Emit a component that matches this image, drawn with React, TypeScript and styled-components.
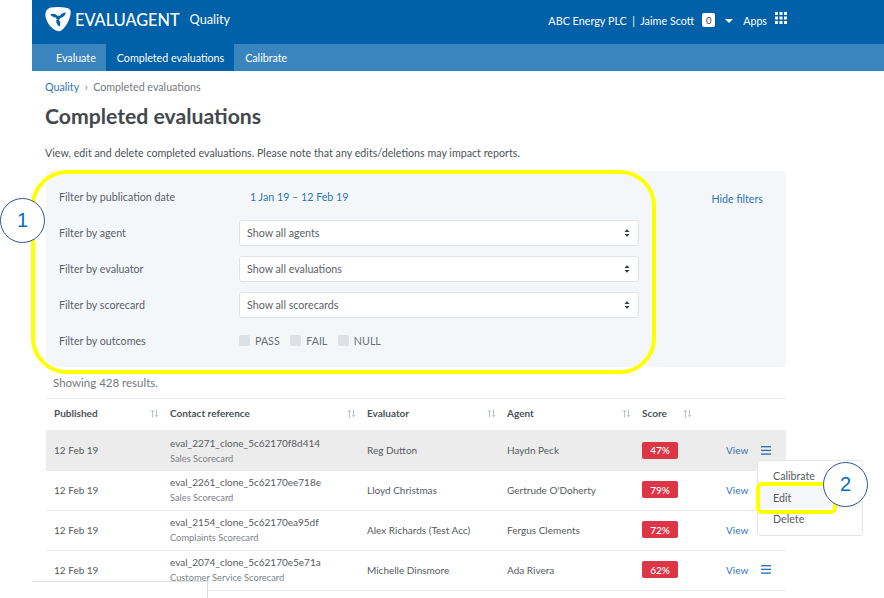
import styled, { createGlobalStyle } from 'styled-components'

const COLUMNS = '116px 197px 140px 135px 84px 1fr'

const rows = [
  { ref: 'eval_2271_clone_5c62170f8d414', card: 'Sales Scorecard', evaluator: 'Reg Dutton', agent: 'Haydn Peck', score: '47%', active: true },
  { ref: 'eval_2261_clone_5c62170ee718e', card: 'Sales Scorecard', evaluator: 'Lloyd Christmas', agent: "Gertrude O'Doherty", score: '79%' },
  { ref: 'eval_2154_clone_5c62170ea95df', card: 'Complaints Scorecard', evaluator: 'Alex Richards (Test Acc)', agent: 'Fergus Clements', score: '72%' },
  { ref: 'eval_2074_clone_5c62170e5e71a', card: 'Customer Service Scorecard', evaluator: 'Michelle Dinsmore', agent: 'Ada Rivera', score: '62%', menu: true },
]

const Logo = () => (
  <svg width="26" height="25" viewBox="0 0 26 25">
    <path d="M6 .6C11 -.3 17 -.2 22 1c2.600.6 4 2.600 3.700 5-.6 6-3.700 12.600-8.700 17-1.800 1.600-4 1.800-6 .6C6 21 2 16.500.5 9.500-.2 5 2 1.400 6 .6z" fill="#fff" />
    <circle cx="13.200" cy="10.600" r="2.200" fill="#0060a8" />
    <path d="M14.500 9.200C15.500 7.500 17.500 5.800 20.800 5.200 20.600 8 18.500 10.500 15.200 11zM13.800 12.500c1.400 1.800 1.800 4.200 1 6.900-2.500-.8-4-3.200-3.400-6.600zM11.400 10.500C9.500 10.600 7 9.700 5.300 7.400 7.800 6 10.800 6.900 12.400 9z" fill="#0060a8" />
  </svg>
)

const AppsIcon = () => (
  <svg width="12" height="12" viewBox="0 0 12 12" fill="#fff">
    {[0, 4.500, 9].flatMap(y =>
      [0, 4.500, 9].map(x => <rect key={`${x}-${y}`} x={x} y={y} width="3" height="3" />),
    )}
  </svg>
)

const SortIcon = () => (
  <svg width="9" height="9" viewBox="0 0 11 10" fill="none" stroke="#b9bfc4" strokeWidth="1.200">
    <path d="M3 10V1M1 3l2-2 2 2M8 0v9M6 7l2 2 2-2" />
  </svg>
)

const SelectArrows = () => (
  <svg width="6" height="8" viewBox="0 0 7 9" fill="#33393f">
    <path d="M3.500 0L6.500 3.400H.5zM3.500 9L.5 5.600h6z" />
  </svg>
)

const MenuIcon = () => (
  <svg width="10" height="9" viewBox="0 0 10 9" fill="#2f74b5">
    <rect width="10" height="1.400" />
    <rect y="3.700" width="10" height="1.400" />
    <rect y="7.400" width="10" height="1.400" />
  </svg>
)

export default function App() {
  return (
    <Page>
      <GlobalStyle />
      <Header>
        <Brand>
          <Logo />
          <BrandName>EVALUAGENT</BrandName>
          <Product>Quality</Product>
        </Brand>
        <UserArea>
          <UserName>ABC Energy PLC&nbsp; |&nbsp; Jaime Scott</UserName>
          <Badge>0</Badge>
          <Caret />
          <span>Apps</span>
          <AppsIcon />
        </UserArea>
      </Header>
      <Tabs>
        <Tab>Evaluate</Tab>
        <Tab $active>Completed evaluations</Tab>
        <Tab>Calibrate</Tab>
      </Tabs>
      <Content>
        <Breadcrumb>
          <a>Quality</a>
          <i>›</i>
          <span>Completed evaluations</span>
        </Breadcrumb>
        <Title>Completed evaluations</Title>
        <Intro>View, edit and delete completed evaluations. Please note that any edits/deletions may impact reports.</Intro>
        <FilterPanel>
          <FilterList>
            <FilterRow>
              <FilterLabel>Filter by publication date</FilterLabel>
              <DateRange>1 Jan 19 – 12 Feb 19</DateRange>
            </FilterRow>
            <FilterRow>
              <FilterLabel>Filter by agent</FilterLabel>
              <Select>Show all agents<SelectArrows /></Select>
            </FilterRow>
            <FilterRow>
              <FilterLabel>Filter by evaluator</FilterLabel>
              <Select>Show all evaluations<SelectArrows /></Select>
            </FilterRow>
            <FilterRow>
              <FilterLabel>Filter by scorecard</FilterLabel>
              <Select>Show all scorecards<SelectArrows /></Select>
            </FilterRow>
            <FilterRow>
              <FilterLabel>Filter by outcomes</FilterLabel>
              <Outcomes>
                <Outcome><Check />PASS</Outcome>
                <Outcome><Check />FAIL</Outcome>
                <Outcome><Check />NULL</Outcome>
              </Outcomes>
            </FilterRow>
          </FilterList>
          <HideFilters>Hide filters</HideFilters>
        </FilterPanel>
        <ResultCount>Showing 428 results.</ResultCount>
        <HeadRow>
          <HeadCell>Published<SortIcon /></HeadCell>
          <HeadCell>Contact reference<SortIcon /></HeadCell>
          <HeadCell>Evaluator<SortIcon /></HeadCell>
          <HeadCell>Agent<SortIcon /></HeadCell>
          <ScoreHead>Score<SortIcon /></ScoreHead>
        </HeadRow>
        {rows.map(row => (
          <Row key={row.ref} $active={row.active}>
            <span>12 Feb 19</span>
            <Reference>
              {row.ref}
              <small>{row.card}</small>
            </Reference>
            <span>{row.evaluator}</span>
            <span>{row.agent}</span>
            <span><Score>{row.score}</Score></span>
            <Actions>
              <a>View</a>
              {(row.active || row.menu) && <MenuIcon />}
            </Actions>
          </Row>
        ))}
      </Content>

      <RowMenu>
        <MenuItem>Calibrate</MenuItem>
        <MenuItem $hover>Edit</MenuItem>
        <MenuItem>Delete</MenuItem>
      </RowMenu>
      <FiltersHighlight />
      <EditHighlight />
      <StepOne>1</StepOne>
      <StepTwo>2</StepTwo>
      <BottomSheet />
    </Page>
  )
}

const GlobalStyle = createGlobalStyle`
  html, body {
    margin: 0;
    background: #fff;
  }
  body {
    font-family: Lato, "Open Sans", "Liberation Sans", sans-serif;
    color: #4b5257;
  }
`
const Page = styled.div`
  position: relative;
  box-sizing: border-box;
  width: 884px;
  height: 598px;
  padding-left: 32px;
  overflow: hidden;
`
const Header = styled.header`
  display: flex;
  justify-content: space-between;
  align-items: flex-start;
  height: 44px;
  padding: 6px 97px 0 13px;
  box-sizing: border-box;
  background: #0060a8;
  color: #fff;
`
const Brand = styled.div`
  display: flex;
  align-items: center;
  height: 26px;
`
const BrandName = styled.span`
  margin-left: 4px;
  font-size: 16.300px;
  font-weight: 500;
`
const Product = styled.span`
  margin-left: 10px;
  font-size: 12.700px;
`
const UserArea = styled.div`
  display: flex;
  align-items: center;
  height: 28px;
  font-size: 10.700px;
  gap: 8px;
  svg {
    margin: -4px 0 0 0;
  }
`
const UserName = styled.span`
  font-size: 10.800px;
`
const Badge = styled.span`
  display: flex;
  justify-content: center;
  align-items: center;
  width: 13px;
  height: 14px;
  border-radius: 2px;
  background: #fff;
  color: #444;
  font-size: 9.500px;
`
const Caret = styled.span`
  margin: 1px 2px 0 2px;
  border-left: 4px solid transparent;
  border-right: 4px solid transparent;
  border-top: 4px solid #fff;
`
const Tabs = styled.nav`
  display: flex;
  height: 27px;
  background: #3a85be;
`
const Tab = styled.a<{ $active?: boolean }>`
  display: flex;
  align-items: center;
  padding: 0 10px 0 ${p => (p.$active ? '11px' : '24px')};
  background: ${p => (p.$active ? '#0060a8' : 'transparent')};
  color: #fff;
  font-size: 10.700px;
  &:last-child {
    padding-left: 11px;
  }
`
const Content = styled.main`
  padding: 0 98px 0 14px;
`
const Breadcrumb = styled.div`
  display: flex;
  gap: 5.500px;
  margin: 8px 0 0 -1px;
  height: 15px;
  line-height: 15px;
  font-size: 10.700px;
  color: #73797e;
  a {
    color: #2f74b5;
  }
  i {
    font-style: normal;
  }
`
const Title = styled.h1`
  margin: 8px 0 0 -1px;
  font-size: 21.200px;
  line-height: 28px;
  font-weight: 700;
  color: #43484c;
`
const Intro = styled.p`
  margin: 15px 0 0 -1px;
  font-size: 10.700px;
  line-height: 16px;
  color: #4b5257;
`
const FilterPanel = styled.section`
  display: flex;
  justify-content: space-between;
  box-sizing: border-box;
  height: 196px;
  margin-top: 10px;
  padding: 8px 23px 0 13px;
  border-radius: 3px;
  background: #f4f7fa;
`
const FilterList = styled.div`
  display: flex;
  flex-direction: column;
`
const FilterRow = styled.div`
  display: flex;
  align-items: center;
  height: 36px;
`
const FilterLabel = styled.span`
  width: 180px;
  margin-top: -1px;
  font-size: 10.700px;
  color: #5a6167;
`
const DateRange = styled.span`
  margin: -1px 0 0 11px;
  font-size: 10.700px;
  color: #2f74b5;
`
const Select = styled.div`
  display: flex;
  justify-content: space-between;
  align-items: center;
  box-sizing: border-box;
  width: 400px;
  height: 26px;
  margin-top: -1px;
  padding: 0 8px 0 7px;
  border: 1px solid #dfe3e8;
  border-radius: 3px;
  background: #fff;
  font-size: 10.700px;
  color: #5a6167;
`
const Outcomes = styled.div`
  display: flex;
  gap: 10.500px;
  margin-top: -1px;
`
const Outcome = styled.label`
  display: flex;
  align-items: center;
  gap: 5px;
  font-size: 10.700px;
  color: #6a7076;
`
const Check = styled.span`
  width: 11px;
  height: 11px;
  border-radius: 2px;
  background: #dde1e6;
`
const HideFilters = styled.a`
  margin-top: 13px;
  font-size: 10.700px;
  color: #2f74b5;
`
const ResultCount = styled.div`
  height: 31px;
  padding: 9px 0 0 7px;
  box-sizing: border-box;
  font-size: 11.500px;
  line-height: 14px;
  color: #73797e;
`
const HeadRow = styled.div`
  display: grid;
  grid-template-columns: ${COLUMNS};
  align-items: center;
  box-sizing: border-box;
  height: 32px;
  padding: 0 0 3px 8px;
  border-top: 1px solid #e6e8ea;
`
const HeadCell = styled.div`
  display: flex;
  justify-content: space-between;
  align-items: center;
  padding-right: 11px;
  font-size: 10px;
  font-weight: 700;
  color: #4b5257;
`
const ScoreHead = styled(HeadCell)`
  justify-content: flex-start;
  gap: 16px;
`
const Row = styled.div<{ $active?: boolean }>`
  display: grid;
  grid-template-columns: ${COLUMNS};
  align-items: center;
  box-sizing: border-box;
  height: ${p => (p.$active ? '41px' : '40px')};
  padding: 0 0 ${p => (p.$active ? '0' : '2px')} 8px;
  border-bottom: 1px solid #e6e8ea;
  background: ${p => (p.$active ? '#ececec' : 'transparent')};
  font-size: 10px;
  color: #565c61;
`
const Reference = styled.div`
  display: flex;
  flex-direction: column;
  gap: 3px;
  margin-top: 1px;
  line-height: 13px;
  small {
    font-size: 9.300px;
    line-height: 12px;
    color: #7c8288;
  }
`
const Score = styled.span`
  display: inline-flex;
  justify-content: center;
  align-items: center;
  width: 36px;
  height: 17px;
  border-radius: 2px;
  background: #dc3545;
  color: #fff;
  font-size: 10px;
  font-weight: 500;
`
const Actions = styled.div`
  display: flex;
  align-items: center;
  gap: 13px;
  font-size: 10px;
  color: #2f74b5;
`
const RowMenu = styled.div`
  position: absolute;
  left: 757px;
  top: 460px;
  box-sizing: border-box;
  width: 106px;
  height: 76px;
  padding: 4px 0;
  border: 1px solid #e4e6e9;
  border-radius: 3px;
  background: #fff;
`
const MenuItem = styled.div<{ $hover?: boolean }>`
  height: 21.500px;
  padding-left: 15px;
  line-height: 21.500px;
  font-size: 10.700px;
  color: #565c61;
  background: ${p => (p.$hover ? '#f5f6f8' : 'transparent')};
`
const FiltersHighlight = styled.div`
  position: absolute;
  left: 31px;
  top: 170px;
  box-sizing: border-box;
  width: 625px;
  height: 204px;
  border: 4px solid #ffff00;
  border-radius: 36px;
`
const EditHighlight = styled.div`
  position: absolute;
  left: 756px;
  top: 482px;
  box-sizing: border-box;
  width: 81px;
  height: 32px;
  border: 4px solid #ffff00;
  border-radius: 6px;
`
const Step = styled.div`
  position: absolute;
  display: flex;
  justify-content: center;
  align-items: center;
  box-sizing: border-box;
  width: 45px;
  height: 45px;
  border: 1px solid #2f5597;
  border-radius: 50%;
  background: #fff;
  color: #0070c0;
  font-family: "Liberation Sans", sans-serif;
  font-size: 20px;
`
const StepOne = styled(Step)`
  left: 0;
  top: 198px;
`
const StepTwo = styled(Step)`
  left: 823px;
  top: 462px;
`
const BottomSheet = styled.div`
  position: absolute;
  left: 32px;
  top: 581px;
  box-sizing: border-box;
  width: 176px;
  height: 17px;
  border-top: 1px solid #dcdfe2;
  border-right: 1px solid #dcdfe2;
  background: #fff;
`
